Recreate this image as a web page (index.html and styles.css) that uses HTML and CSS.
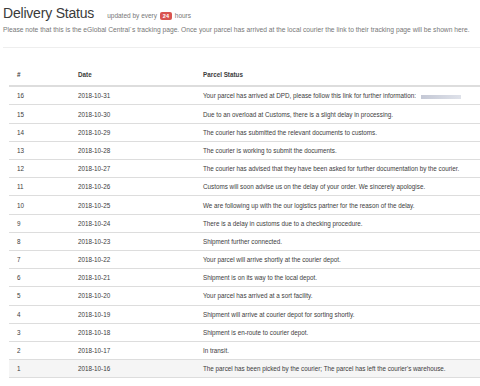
FILE: index.html
```html
<!DOCTYPE html>
<html lang="en">
<head>
  <meta charset="UTF-8">
  <meta name="viewport" content="width=device-width, initial-scale=1.0">
  <title>Delivery Status</title>
  <link rel="stylesheet" href="styles.css">
</head>
<body>
  <div class="page">
    <div class="title-row">
      <h1>Delivery Status</h1>
      <small>updated by every <span class="badge">24</span> hours</small>
    </div>
    <p class="note">Please note that this is the eGlobal Central´s tracking page. Once your parcel has arrived at the local courier the link to their tracking page will be shown here.</p>
    <hr>

    <table class="status">
      <colgroup>
        <col class="col-num">
        <col class="col-date">
        <col>
      </colgroup>
      <thead>
        <tr><th>#</th><th>Date</th><th>Parcel Status</th></tr>
      </thead>
      <tbody>
        <tr><td>16</td><td>2018-10-31</td><td>Your parcel has arrived at DPD, please follow this link for further information: <span class="link-blur"></span></td></tr>
        <tr><td>15</td><td>2018-10-30</td><td>Due to an overload at Customs, there is a slight delay in processing.</td></tr>
        <tr><td>14</td><td>2018-10-29</td><td>The courier has submitted the relevant documents to customs.</td></tr>
        <tr><td>13</td><td>2018-10-28</td><td>The courier is working to submit the documents.</td></tr>
        <tr><td>12</td><td>2018-10-27</td><td>The courier has advised that they have been asked for further documentation by the courier.</td></tr>
        <tr><td>11</td><td>2018-10-26</td><td>Customs will soon advise us on the delay of your order. We sincerely apologise.</td></tr>
        <tr><td>10</td><td>2018-10-25</td><td>We are following up with the our logistics partner for the reason of the delay.</td></tr>
        <tr><td>9</td><td>2018-10-24</td><td>There is a delay in customs due to a checking procedure.</td></tr>
        <tr><td>8</td><td>2018-10-23</td><td>Shipment further connected.</td></tr>
        <tr><td>7</td><td>2018-10-22</td><td>Your parcel will arrive shortly at the courier depot.</td></tr>
        <tr><td>6</td><td>2018-10-21</td><td>Shipment is on its way to the local depot.</td></tr>
        <tr><td>5</td><td>2018-10-20</td><td>Your parcel has arrived at a sort facility.</td></tr>
        <tr><td>4</td><td>2018-10-19</td><td>Shipment will arrive at courier depot for sorting shortly.</td></tr>
        <tr><td>3</td><td>2018-10-18</td><td>Shipment is en-route to courier depot.</td></tr>
        <tr><td>2</td><td>2018-10-17</td><td>In transit.</td></tr>
        <tr class="active"><td>1</td><td>2018-10-16</td><td>The parcel has been picked by the courier; The parcel has left the courier's warehouse.</td></tr>
      </tbody>
    </table>
  </div>
</body>
</html>
```

FILE: styles.css
```css
body {
  margin: 0;
  font-family: "Liberation Sans", Arial, sans-serif;
  color: #333;
  background: #fff;
}

.page {
  padding-left: 3px;
  overflow: hidden;
}

.title-row {
  display: flex;
  align-items: baseline;
  gap: 13px;
  padding-top: 6px;
}

.title-row h1 {
  margin: 0;
  font-size: 14px;
  line-height: 1;
  font-weight: normal;
  letter-spacing: -0.2px;
  color: #3a3a3a;
}

.title-row small {
  font-size: 6.5px;
  color: #777;
}

.badge {
  display: inline-block;
  background: #d9534f;
  color: #fff;
  font-weight: bold;
  font-size: 5.5px;
  line-height: 8px;
  padding: 0 3px;
  border-radius: 2px;
  margin: 0 1px;
  vertical-align: middle;
}

.note {
  margin: 6px 0 0;
  font-size: 6.7px;
  color: #777;
}

hr {
  border: 0;
  border-top: 1px solid #eee;
  margin: 14px 0 0;
}

.status {
  margin: 16px 0 0 6px;
  width: 480px;
  border-collapse: collapse;
  font-size: 6.3px;
  color: #3c3c3c;
}

.col-num { width: 61px; }
.col-date { width: 125px; }

.status th {
  text-align: left;
  font-weight: bold;
  padding: 7px 8px;
  border-bottom: 2px solid #ddd;
}

.status td {
  height: 17.2px;
  padding: 0 8px;
  border-top: 1px solid #ddd;
  white-space: nowrap;
}

.status tbody tr:last-child td {
  border-bottom: 1px solid #ddd;
}

.status tr.active td {
  background: #f5f5f5;
}

.link-blur {
  display: inline-block;
  width: 40px;
  height: 4px;
  margin-left: 3px;
  vertical-align: middle;
  background: linear-gradient(to right, #c4c8d5, #dfe2ea);
}
```
